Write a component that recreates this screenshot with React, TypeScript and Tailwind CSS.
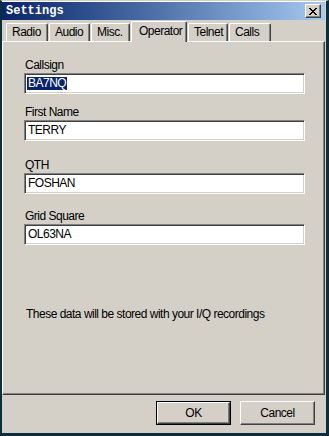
import React from "react";

const FONT = "font-['Liberation_Sans',Arial,sans-serif] text-[12px] leading-[15px] tracking-[-0.5px]";

function Tab({ label, w, selected }: { label: string; w: number; selected?: boolean }) {
  if (selected) {
    return (
      <div
        className="relative z-10 -mx-[2px] -mb-[1px] h-[21px] bg-[#d4d0c8] border-t border-l border-r border-t-white border-l-white border-r-[#404040] rounded-t-[2px] shadow-[inset_-1px_0_#808080] pl-[7px] pt-[2px] text-black"
        style={{ width: w + 4 }}
      >
        {label}
      </div>
    );
  }
  return (
    <div
      className="h-[18px] bg-[#d4d0c8] border-t border-l border-r border-t-white border-l-white border-r-[#404040] rounded-t-[2px] shadow-[inset_-1px_0_#808080] pl-[5px] pt-[1px] text-black"
      style={{ width: w }}
    >
      {label}
    </div>
  );
}

function Field({ label, value, selected, mt }: { label: string; value: string; selected?: boolean; mt: string }) {
  return (
    <div className={mt}>
      <div className="pl-[1px] h-[15px]">{label}</div>
      <div className="h-[21px] w-[281px] bg-white border border-t-[#808080] border-l-[#808080] border-r-white border-b-white shadow-[inset_1px_1px_#404040,inset_-1px_-1px_#d4d0c8] flex items-center pl-[2px]">
        {selected ? (
          <span className="bg-[#0a246a] text-white h-[13px] leading-[13px] px-[1px]">{value}</span>
        ) : (
          <span className="text-black px-[1px]">{value}</span>
        )}
      </div>
    </div>
  );
}

export default function App() {
  return (
    <div className={`w-[329px] h-[436px] bg-[#d4d0c8] flex flex-col border-l-2 border-r-[3px] border-b-[3px] border-t border-l-[#0c2d3b] border-r-[#0c2d3b] border-b-[#0c2d3b] border-t-[#d4d0c8] ${FONT} overflow-hidden`}>
      <div className="flex-1 flex flex-col border-t border-t-white">
        {/* Title bar */}
        <div className="h-[18px] mr-[1px] bg-linear-to-r from-[#0a246a] to-[#a6caf0] flex items-center justify-between pl-[4px] pr-[4px]">
          <span className="font-['Liberation_Mono',monospace] font-bold text-[12px] leading-[14px] tracking-[0px] text-white">Settings</span>
          <div className="w-[16px] h-[14px] bg-[#d4d0c8] border border-t-white border-l-white border-r-[#404040] border-b-[#404040] shadow-[inset_-1px_-1px_#808080] flex items-center justify-center">
            <svg width="8" height="7" viewBox="0 0 8 7" shapeRendering="crispEdges">
              <path d="M0 0h2v1H0zM6 0h2v1H6zM1 1h2v1H1zM5 1h2v1H5zM2 2h4v1H2zM3 3h2v1H3zM2 4h4v1H2zM1 5h2v1H1zM5 5h2v1H5zM0 6h2v1H0zM6 6h2v1H6z" fill="#000" />
            </svg>
          </div>
        </div>

        {/* Tabs */}
        <div className="mt-[1px] h-[20px] flex items-end gap-[1px] pl-[4px]">
          <Tab label="Radio" w={42} />
          <Tab label="Audio" w={41} />
          <Tab label="Misc." w={39} />
          <div className="w-[1px]" />
          <Tab label="Operator" w={52} selected />
          <div className="w-[1px]" />
          <Tab label="Telnet" w={40} />
          <Tab label="Calls" w={42} />
        </div>

        {/* Panel */}
        <div className="h-[354px] mr-[1px] border border-t-white border-l-white border-r-[#404040] border-b-[#404040] shadow-[inset_-1px_-1px_#808080] pl-[21px] flex flex-col text-black">
          <Field label="Callsign" value="BA7NQ" selected mt="mt-[16px]" />
          <Field label="First Name" value="TERRY" mt="mt-[11px]" />
          <Field label="QTH" value="FOSHAN" mt="mt-[17px]" />
          <Field label="Grid Square" value="OL63NA" mt="mt-[15px]" />
          <div className="mt-[62px] pl-[2px]">These data will be stored with your I/Q recordings</div>
        </div>

        {/* Buttons */}
        <div className="flex-1 flex items-start justify-end gap-[9px] pt-[6px] pr-[11px]">
          <div className="w-[75px] h-[24px] border border-black bg-[#d4d0c8]">
            <div className="w-full h-full border border-t-white border-l-white border-r-[#404040] border-b-[#404040] shadow-[inset_-1px_-1px_#808080] flex items-center justify-center text-black">
              OK
            </div>
          </div>
          <div className="w-[75px] h-[24px] border border-t-white border-l-white border-r-[#404040] border-b-[#404040] shadow-[inset_-1px_-1px_#808080] bg-[#d4d0c8] flex items-center justify-center text-black">
            Cancel
          </div>
        </div>
      </div>
    </div>
  );
}
